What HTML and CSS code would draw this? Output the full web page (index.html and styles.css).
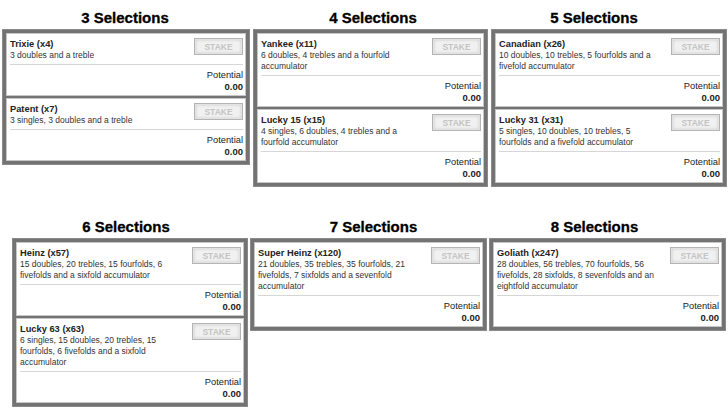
FILE: index.html
```html
<!DOCTYPE html>
<html lang="en">
<head>
<meta charset="UTF-8">
<meta name="viewport" content="width=device-width, initial-scale=1.0">
<title>Multiple Bets</title>
<link rel="stylesheet" href="styles.css">
</head>
<body>
  <div class="row row-top">

    <section class="sel sel-3">
      <h2>3 Selections</h2>
      <div class="group">
        <div class="card">
          <div class="top">
            <div class="info">
              <div class="name">Trixie (x4)</div>
              <div class="desc">3 doubles and a treble</div>
            </div>
            <button class="stake">STAKE</button>
          </div>
          <div class="potential">Potential<b>0.00</b></div>
        </div>
        <div class="card">
          <div class="top">
            <div class="info">
              <div class="name">Patent (x7)</div>
              <div class="desc">3 singles, 3 doubles and a treble</div>
            </div>
            <button class="stake">STAKE</button>
          </div>
          <div class="potential">Potential<b>0.00</b></div>
        </div>
      </div>
    </section>

    <section class="sel sel-4">
      <h2>4 Selections</h2>
      <div class="group">
        <div class="card">
          <div class="top">
            <div class="info">
              <div class="name">Yankee (x11)</div>
              <div class="desc">6 doubles, 4 trebles and a fourfold accumulator</div>
            </div>
            <button class="stake">STAKE</button>
          </div>
          <div class="potential">Potential<b>0.00</b></div>
        </div>
        <div class="card">
          <div class="top">
            <div class="info">
              <div class="name">Lucky 15 (x15)</div>
              <div class="desc">4 singles, 6 doubles, 4 trebles and a fourfold accumulator</div>
            </div>
            <button class="stake">STAKE</button>
          </div>
          <div class="potential">Potential<b>0.00</b></div>
        </div>
      </div>
    </section>

    <section class="sel sel-5">
      <h2>5 Selections</h2>
      <div class="group">
        <div class="card">
          <div class="top">
            <div class="info">
              <div class="name">Canadian (x26)</div>
              <div class="desc">10 doubles, 10 trebles, 5 fourfolds and a fivefold accumulator</div>
            </div>
            <button class="stake">STAKE</button>
          </div>
          <div class="potential">Potential<b>0.00</b></div>
        </div>
        <div class="card">
          <div class="top">
            <div class="info">
              <div class="name">Lucky 31 (x31)</div>
              <div class="desc">5 singles, 10 doubles, 10 trebles, 5 fourfolds and a fivefold accumulator</div>
            </div>
            <button class="stake">STAKE</button>
          </div>
          <div class="potential">Potential<b>0.00</b></div>
        </div>
      </div>
    </section>

  </div>

  <div class="row row-bottom">

    <section class="sel sel-6">
      <h2>6 Selections</h2>
      <div class="group">
        <div class="card">
          <div class="top">
            <div class="info">
              <div class="name">Heinz (x57)</div>
              <div class="desc">15 doubles, 20 trebles, 15 fourfolds, 6 fivefolds and a sixfold accumulator</div>
            </div>
            <button class="stake">STAKE</button>
          </div>
          <div class="potential">Potential<b>0.00</b></div>
        </div>
        <div class="card">
          <div class="top">
            <div class="info">
              <div class="name">Lucky 63 (x63)</div>
              <div class="desc">6 singles, 15 doubles, 20 trebles, 15 fourfolds, 6 fivefolds and a sixfold accumulator</div>
            </div>
            <button class="stake">STAKE</button>
          </div>
          <div class="potential">Potential<b>0.00</b></div>
        </div>
      </div>
    </section>

    <section class="sel sel-7">
      <h2>7 Selections</h2>
      <div class="group">
        <div class="card">
          <div class="top">
            <div class="info">
              <div class="name">Super Heinz (x120)</div>
              <div class="desc">21 doubles, 35 trebles, 35 fourfolds, 21 fivefolds, 7 sixfolds and a sevenfold accumulator</div>
            </div>
            <button class="stake">STAKE</button>
          </div>
          <div class="potential">Potential<b>0.00</b></div>
        </div>
      </div>
    </section>

    <section class="sel sel-8">
      <h2>8 Selections</h2>
      <div class="group">
        <div class="card">
          <div class="top">
            <div class="info">
              <div class="name">Goliath (x247)</div>
              <div class="desc">28 doubles, 56 trebles, 70 fourfolds, 56 fivefolds, 28 sixfolds, 8 sevenfolds and an eightfold accumulator</div>
            </div>
            <button class="stake">STAKE</button>
          </div>
          <div class="potential">Potential<b>0.00</b></div>
        </div>
      </div>
    </section>

  </div>
</body>
</html>
```

FILE: styles.css
```css
/* Page */
body {
  margin: 0;
  background: #fff;
  font-family: "Liberation Sans", Arial, sans-serif;
  color: #222;
}

/* Rows of selection groups */
.row {
  display: flex;
  align-items: flex-start;
}

.row-top {
  padding-left: 2px;
  gap: 3px;
}

.row-bottom {
  margin-top: 22px;
  padding-left: 12px;
  gap: 2px;
}

.sel-3 { width: 248px; }
.sel-4 { width: 235px; }
.sel-5 { width: 236px; }
.sel-6 { width: 236px; }
.sel-7 { width: 237px; }
.sel-8 { width: 237px; }

/* Section titles */
.sel h2 {
  margin: 8px 0 1px;
  font-size: 15px;
  line-height: 20px;
  font-weight: bold;
  color: #000;
  text-align: center;
  -webkit-text-stroke: 0.3px #000;
}

.sel-3 h2 { padding-right: 2px; }
.sel-4 h2 { padding-left: 5px; }
.sel-5 h2 { padding-right: 30px; }
.sel-6 h2 { padding-right: 8px; }
.sel-7 h2 { padding-left: 10px; }
.sel-8 h2 { padding-right: 26px; }

/* Grey frame around the cards */
.group {
  display: flex;
  flex-direction: column;
  gap: 2px;
  padding: 3px;
  background: #737373;
  border: 1px solid #8a8a8a;
}

.card {
  background: #fff;
  border: 1px solid #c6c6c6;
  padding: 4px 2px 2px 3px;
}

.top {
  display: flex;
  align-items: flex-start;
  padding-bottom: 3px;
  border-bottom: 1px solid #d6d6d6;
}

.info {
  flex: 0 0 164px;
}

.name {
  font-size: 9.3px;
  line-height: 12px;
  font-weight: bold;
  color: #222;
}

.desc {
  font-size: 8.5px;
  line-height: 11px;
  color: #333;
}

/* Disabled stake button */
.stake {
  margin-left: auto;
  width: 49px;
  height: 17px;
  padding: 0;
  background: #f1f1f1;
  border: 1px solid #b4b4b4;
  box-shadow: inset 0 0 0 1px #e2e2e2, inset 0 0 3px 1px #c8c8c8;
  font-family: inherit;
  font-size: 8.5px;
  font-weight: bold;
  color: #c4c4c4;
}

.potential {
  padding-top: 4px;
  text-align: right;
  font-size: 9.3px;
  line-height: 12px;
  color: #222;
}

.potential b {
  display: block;
  font-size: 9.5px;
}
```
